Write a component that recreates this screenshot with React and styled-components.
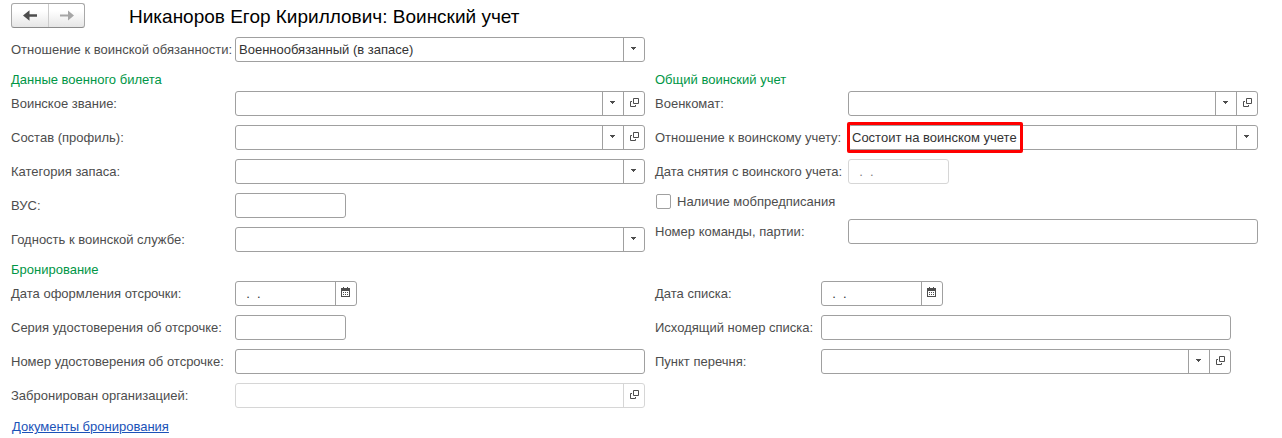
import React from 'react'
import { useId, useState } from 'react'
import styled, { createGlobalStyle, css } from 'styled-components'


const GlobalStyle = createGlobalStyle`
  * {
    box-sizing: border-box;
  }

  body {
    margin: 0;
    background-color: white;
    color: #4d4d4d;
    font-family: "Liberation Sans", Arial, sans-serif;
    font-size: 13px;
    line-height: 17px;
  }

  input, select, button {
    font: inherit;
    color: #333333;
  }
`

const Page = styled.main`
  padding: 3px 24px 3px 11px;
`

const Header = styled.header`
  display: flex;
  align-items: flex-start;
  gap: 44px;
  height: 25px;
`

const Title = styled.h1`
  margin: 0;
  font-size: 19px;
  line-height: 27px;
  font-weight: 400;
  color: black;
`

const NavButtons = styled.div`
  display: flex;
  border: 1px solid #a8a8a8;
  border-bottom-color: #8c8c8c;
  border-radius: 3px;
  background: linear-gradient(white 30%, #e6e6e6);
`

const NavButton = styled.button`
  display: flex;
  align-items: center;
  justify-content: center;
  width: 36px;
  height: 23px;
  padding: 0;
  border: none;
  background: none;
  color: #4d4d4d;
  cursor: pointer;

  &:disabled {
    color: #a6a6a6;
    cursor: default;
  }

  & + & {
    border-left: 1px solid #cccccc;
  }
`

const Columns = styled.div`
  display: grid;
  grid-template-columns: minmax(0, 634fr) minmax(0, 603fr);
  column-gap: 10px;
  align-items: start;
  margin-top: 9px;
`

const Group = styled.section`
  display: flex;
  flex-direction: column;
  gap: 9px;
  padding-right: ${props => props.$indent ? '27px' : '0'};
`

const GroupTitle = styled.h2`
  min-height: 17px;
  margin: 0 0 -6px;
  font-size: 13px;
  line-height: 17px;
  font-weight: 400;
  color: #009646;
`

const Row = styled.div`
  display: grid;
  grid-template-columns: ${props => props.$label}px minmax(0, 1fr);
  align-items: center;
`

const Label = styled.label`
  white-space: nowrap;
`

const Frame = styled.div`
  position: relative;
  display: grid;
  grid-template-columns: minmax(0, 1fr) auto auto;
  width: ${props => props.$width ? props.$width + 'px' : '100%'};
  height: 25px;
  border: 1px solid #a0a0a0;
  border-radius: 3px;
  background-color: white;

  ${props => props.$disabled && css`
    border-color: #d6d6d6;
  `}
`

const control = css`
  grid-row: 1;
  width: 100%;
  height: 23px;
  padding: 0 3px;
  border: none;
  border-radius: 3px;
  outline: none;
  background: none;
  appearance: none;

  &:disabled {
    color: #808080;
    opacity: 1;
  }
`

const Input = styled.input`
  ${control}
  grid-column: 1;
`

const Select = styled.select`
  ${control}
  grid-column: 1 / 3;
  cursor: pointer;
`

const ArrowBox = styled.span`
  grid-row: 1;
  grid-column: 2;
  display: flex;
  justify-content: center;
  width: 21px;
  padding-top: 9px;
  border-left: 1px solid #a0a0a0;
  pointer-events: none;
`

const IconButton = styled.button`
  grid-row: 1;
  grid-column: 3;
  display: flex;
  align-items: flex-start;
  justify-content: center;
  width: 21px;
  padding: 5px 0 0;
  border: none;
  border-left: 1px solid ${props => props.$disabled ? '#d6d6d6' : '#a0a0a0'};
  background: none;
  cursor: pointer;
`

const Highlight = styled.span`
  position: absolute;
  top: -4px;
  left: -2px;
  width: 176px;
  height: 31px;
  border: 3px solid #ff0000;
  border-radius: 2px;
  pointer-events: none;
`

const CheckRow = styled.div`
  display: flex;
  align-items: center;
  gap: 6px;
  height: 17px;
  padding-left: 1px;
`

const Checkbox = styled.input`
  width: 15px;
  height: 15px;
  margin: 0;
  border: 1px solid #a0a0a0;
  border-radius: 2px;
  background-color: white;
  appearance: none;

  &:checked {
    background-color: #4d4d4d;
    box-shadow: inset 0 0 0 3px white;
  }
`

const DocsLink = styled.a`
  display: inline-block;
  margin: 10px 0 0 1px;
  color: #1a52b8;
`


const ArrowIcon = ({ forward }) => (
  <svg width="14" height="11" viewBox="0 0 14 11" fill="currentColor" aria-hidden="true">
    {forward
      ? <path d="M0 4.500h8V.4L14 5.500 8 10.600V6.500H0z" />
      : <path d="M14 4.300H6.500V.2L0 5.500l6.500 5.300V6.700H14z" />}
  </svg>
)

const ChevronIcon = () => (
  <svg width="6" height="3" viewBox="0 0 6 3" fill="#4d4d4d" shapeRendering="crispEdges" aria-hidden="true">
    <path d="M0 0h5v1H4v1H3v1H2V2H1V1H0z" />
  </svg>
)

const OpenIcon = () => (
  <svg width="10" height="10" viewBox="-1 -1 10 10" fill="none" stroke="#4d4d4d" aria-hidden="true">
    <path d="M3.500 .5h5v5h-5z" />
    <path d="M2 3.500H.5v5h5V7" />
  </svg>
)

const CalendarIcon = () => (
  <svg width="10" height="10" viewBox="0 0 10 10" fill="#4d4d4d" shapeRendering="crispEdges" aria-hidden="true">
    <path d="M2 0h1v1h3V0h1v1h2v9H0V1h2zM1 4v5h7V4z" fillRule="evenodd" />
    <path d="M2 5h1v1H2zM4 5h1v1H4zM6 5h1v1H6zM2 7h1v1H2zM4 7h1v1H4zM6 7h1v1H6z" />
  </svg>
)


function TextField({ label, labelWidth, width }) {
  const id = useId()
  return (
    <Row $label={labelWidth}>
      <Label htmlFor={id}>{label}</Label>
      <Frame $width={width}>
        <Input id={id} type="text" />
      </Frame>
    </Row>
  )
}

function SelectField({ label, labelWidth, value = '', openable, highlighted }) {
  const id = useId()
  return (
    <Row $label={labelWidth}>
      <Label htmlFor={id}>{label}</Label>
      <Frame>
        <Select id={id} defaultValue={value}>
          <option value={value}>{value}</option>
        </Select>
        <ArrowBox><ChevronIcon /></ArrowBox>
        {openable && <IconButton type="button" aria-label="Открыть"><OpenIcon /></IconButton>}
        {highlighted && <Highlight />}
      </Frame>
    </Row>
  )
}

function DateField({ label, labelWidth, disabled }) {
  const id = useId()
  const [date, setDate] = useState('  .  .')
  return (
    <Row $label={labelWidth}>
      <Label htmlFor={id}>{label}</Label>
      <Frame $width={disabled ? 101 : 122} $disabled={disabled}>
        <Input id={id} type="text" value={date} disabled={disabled} onChange={e => setDate(e.target.value)} />
        {!disabled && <IconButton type="button" aria-label="Выбрать дату"><CalendarIcon /></IconButton>}
      </Frame>
    </Row>
  )
}


function App() {
  return (
    <>
      <GlobalStyle />
      <Page>
        <Header>
          <NavButtons>
            <NavButton type="button" aria-label="Назад"><ArrowIcon /></NavButton>
            <NavButton type="button" aria-label="Вперед" disabled><ArrowIcon forward /></NavButton>
          </NavButtons>
          <Title>Никаноров Егор Кириллович: Воинский учет</Title>
        </Header>

        <Columns>
          <SelectField label="Отношение к воинской обязанности:" labelWidth={224} value="Военнообязанный (в запасе)" />
        </Columns>

        <Columns>
          <Group>
            <GroupTitle>Данные военного билета</GroupTitle>
            <SelectField label="Воинское звание:" labelWidth={224} openable />
            <SelectField label="Состав (профиль):" labelWidth={224} openable />
            <SelectField label="Категория запаса:" labelWidth={224} />
            <TextField label="ВУС:" labelWidth={224} width={111} />
            <SelectField label="Годность к воинской службе:" labelWidth={224} />
          </Group>
          <Group>
            <GroupTitle>Общий воинский учет</GroupTitle>
            <SelectField label="Военкомат:" labelWidth={193} openable />
            <SelectField label="Отношение к воинскому учету:" labelWidth={193} value="Состоит на воинском учете" highlighted />
            <DateField label="Дата снятия с воинского учета:" labelWidth={193} disabled />
            <CheckRow>
              <Checkbox type="checkbox" id="mob-order" />
              <Label htmlFor="mob-order">Наличие мобпредписания</Label>
            </CheckRow>
            <TextField label="Номер команды, партии:" labelWidth={193} />
          </Group>
        </Columns>

        <Columns>
          <Group>
            <GroupTitle>Бронирование</GroupTitle>
            <DateField label="Дата оформления отсрочки:" labelWidth={224} />
            <TextField label="Серия удостоверения об отсрочке:" labelWidth={224} width={111} />
            <TextField label="Номер удостоверения об отсрочке:" labelWidth={224} />
            <Row $label={224}>
              <Label htmlFor="organization">Забронирован организацией:</Label>
              <Frame $disabled>
                <Input id="organization" type="text" disabled />
                <IconButton type="button" aria-label="Открыть" $disabled><OpenIcon /></IconButton>
              </Frame>
            </Row>
          </Group>
          <Group $indent>
            <GroupTitle as="div" />
            <DateField label="Дата списка:" labelWidth={166} />
            <TextField label="Исходящий номер списка:" labelWidth={166} />
            <SelectField label="Пункт перечня:" labelWidth={166} openable />
          </Group>
        </Columns>

        <DocsLink href="#">Документы бронирования</DocsLink>
      </Page>
    </>
  )
}

export default App
